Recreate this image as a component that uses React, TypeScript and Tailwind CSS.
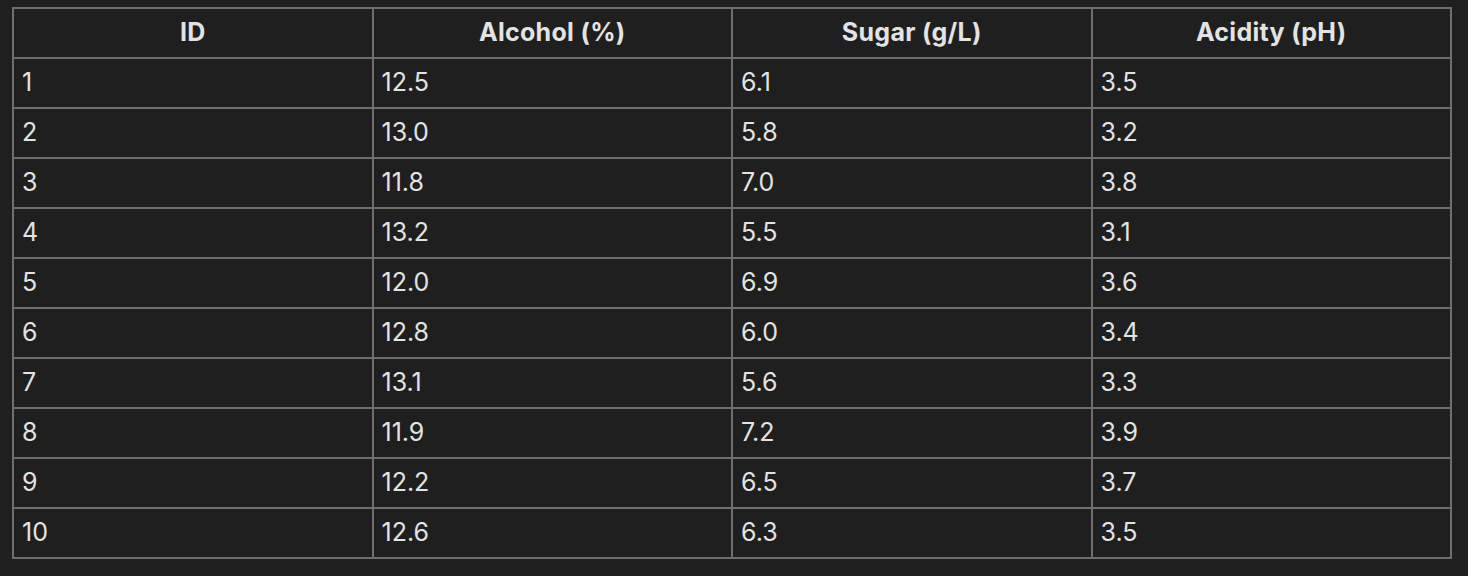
const rows = [
  ['1', '12.5', '6.1', '3.5'],
  ['2', '13.0', '5.8', '3.2'],
  ['3', '11.8', '7.0', '3.8'],
  ['4', '13.2', '5.5', '3.1'],
  ['5', '12.0', '6.9', '3.6'],
  ['6', '12.8', '6.0', '3.4'],
  ['7', '13.1', '5.6', '3.3'],
  ['8', '11.9', '7.2', '3.9'],
  ['9', '12.2', '6.5', '3.7'],
  ['10', '12.6', '6.3', '3.5'],
];

const headers = ['ID', 'Alcohol (%)', 'Sugar (g/L)', 'Acidity (pH)'];

export default function App() {
  return (
    <div
      className="min-h-[576px] w-full bg-[#1f1f1f] pl-3 pr-4 pt-[7px] text-[#e3e3e3]"
      style={{ fontFamily: 'Inter, "Liberation Sans", sans-serif' }}
    >
      <table className="w-[1440px] table-fixed border-collapse border-2 border-[#6e6e6e]">
        <thead>
          <tr className="h-[50px]">
            {headers.map((h) => (
              <th key={h} className="border-2 border-[#6e6e6e] px-2 text-center text-[25px] font-bold tracking-[0.3px]">
                {h}
              </th>
            ))}
          </tr>
        </thead>
        <tbody>
          {rows.map((r) => (
            <tr key={r[0]} className="h-[50px]">
              {r.map((c, i) => (
                <td key={i} className="border-2 border-[#6e6e6e] px-2 text-left text-[25px]">
                  {c}
                </td>
              ))}
            </tr>
          ))}
        </tbody>
      </table>
    </div>
  );
}
